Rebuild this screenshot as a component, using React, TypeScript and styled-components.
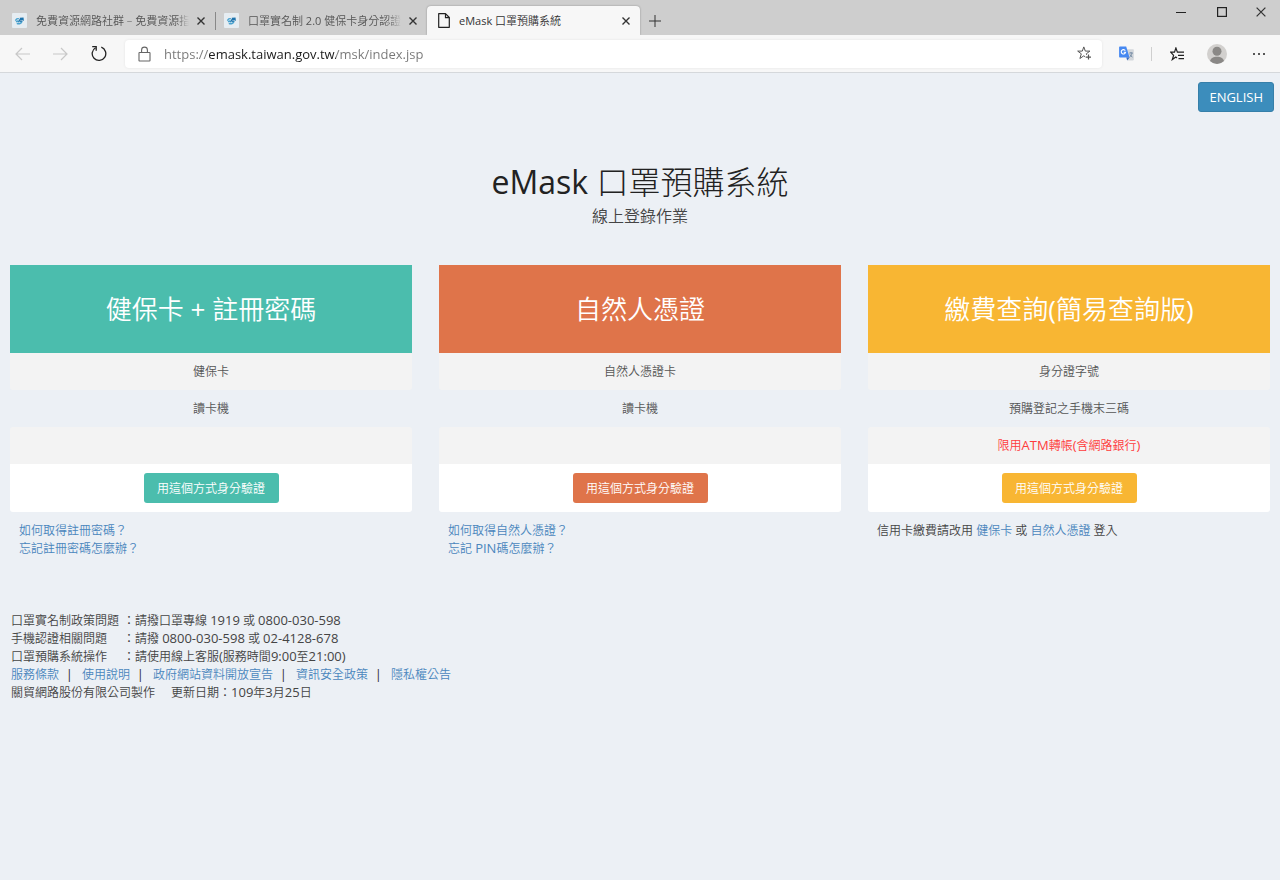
import React from 'react';
import styled, { createGlobalStyle } from 'styled-components';

const GlobalStyle = createGlobalStyle`
  *, *::before, *::after { box-sizing: border-box; }
  body {
    margin: 0;
    background: #ecf0f5;
    color: #444;
    font-family: "Open Sans", "Noto Sans CJK TC", sans-serif;
    font-size: 12px;
    font-weight: 350;
    line-height: 18px;
  }
  button, input { font-family: inherit; font-weight: inherit; }
`;

/* ---------- Browser chrome ---------- */

const TitleBar = styled.header`
  display: flex;
  align-items: flex-end;
  height: 35px;
  background: #cecece;
`;

const TabStrip = styled.nav`
  display: flex;
  align-items: flex-end;
  height: 35px;
  padding-left: 3px;
`;

const Tab = styled.div<{ $active?: boolean }>`
  display: flex;
  align-items: center;
  width: ${p => (p.$active ? 213 : 212)}px;
  height: 29px;
  padding: 0 6px 0 ${p => (p.$active ? 11 : 9)}px;
  background: ${p => (p.$active ? '#f7f7f7' : 'transparent')};
  border-radius: 4px 4px 0 0;
  color: ${p => (p.$active ? '#333' : '#555')};
  box-shadow: ${p => (p.$active ? '0 0 2px rgba(0, 0, 0, 0.35)' : 'none')};
  clip-path: inset(-3px -3px 0 -3px);
`;

const TabDivider = styled.span`
  width: 1px;
  height: 18px;
  margin: 0 -1px 5px 0;
  background: #888;
`;

const TabTitle = styled.span<{ $fade?: boolean }>`
  flex: 1;
  min-width: 0;
  margin: 0 4px 0 9px;
  overflow: hidden;
  white-space: nowrap;
  font-size: 11px;
  ${p => p.$fade && 'mask-image: linear-gradient(90deg, #000 92%, transparent);'}
`;

const IconButton = styled.button<{ $w?: number; $h?: number }>`
  display: flex;
  align-items: center;
  justify-content: center;
  flex: none;
  width: ${p => p.$w ?? 38}px;
  height: ${p => p.$h ?? 28}px;
  padding: 0;
  border: 0;
  background: transparent;
  color: #333;
  &:disabled { color: #c8c8c8; }
`;

const WindowControls = styled.div`
  display: flex;
  align-self: flex-start;
  margin-left: auto;
`;

const Toolbar = styled.div`
  display: flex;
  align-items: center;
  height: 38px;
  padding-left: 3px;
  background: #f7f7f7;
  border-bottom: 1px solid #d5d8db;
`;

const AddressBar = styled.label`
  display: flex;
  align-items: center;
  flex: 1;
  height: 28px;
  margin: 0 5px 0 6px;
  padding-left: 13px;
  background: #fff;
  border-radius: 4px;
  box-shadow: 0 0 3px rgba(0, 0, 0, 0.08);
`;

const AddressInput = styled.input`
  flex: 1;
  min-width: 0;
  height: 26px;
  margin-left: 13px;
  padding: 0;
  border: 0;
  outline: 0;
  font-size: 13px;
  font-weight: 400;
  color: transparent;
  background: linear-gradient(90deg, #777 45px, #1a1a1a 45px 172px, #777 172px);
  background-clip: text;
  -webkit-background-clip: text;
`;

const ToolDivider = styled.span`
  width: 1px;
  height: 14px;
  margin: 0 6px;
  background: #cfcfcf;
`;

/* ---------- Page ---------- */

const LanguageRow = styled.div`
  display: flex;
  justify-content: flex-end;
  padding: 9px 6px 0;
`;

const LanguageButton = styled.button`
  height: 30px;
  padding: 0 10px;
  border: 1px solid #367fa9;
  border-radius: 3px;
  background: #3c8dbc;
  color: #fff;
  font-size: 13px;
  font-weight: 400;
`;

const Heading = styled.div`
  display: flex;
  flex-direction: column;
  align-items: center;
  padding: 48px 10px 37px;
`;

const Title = styled.h1`
  margin: 0;
  color: #222;
  font-size: 32px;
  font-weight: 300;
  line-height: 44px;
`;

const Subtitle = styled.p`
  margin: 0;
  font-size: 16px;
  line-height: 24px;
`;

const Cards = styled.main`
  display: grid;
  grid-template-columns: repeat(3, 1fr);
  gap: 27px;
  padding: 0 10px;
`;

const CardTitle = styled.h2<{ $color: string }>`
  display: flex;
  align-items: center;
  justify-content: center;
  height: 88px;
  margin: 0;
  background: ${p => p.$color};
  color: #fff;
  font-size: 26px;
  font-weight: 350;
`;

const Requirements = styled.ul`
  margin: 0;
  padding: 0;
  list-style: none;
`;

const Requirement = styled.li<{ $notice?: boolean }>`
  display: flex;
  align-items: center;
  justify-content: center;
  height: 37px;
  border-radius: 0 0 3px 3px;
  color: ${p => (p.$notice ? '#ff3b3b' : '#555')};
  &:nth-child(odd) { background: #f3f3f3; }
  &:last-child { border-radius: 3px 3px 0 0; }
`;

const CardAction = styled.div`
  display: flex;
  align-items: center;
  justify-content: center;
  height: 48px;
  background: #fff;
  border-radius: 0 0 3px 3px;
`;

const VerifyButton = styled.button<{ $color: string }>`
  width: 135px;
  height: 30px;
  padding: 0;
  border: 0;
  border-radius: 3px;
  background: ${p => p.$color};
  color: #fff;
  font-size: 12px;
`;

const CardNotes = styled.div`
  display: flex;
  flex-direction: column;
  align-items: flex-start;
  padding: 10px 9px 0;
`;

const Note = styled.p`
  margin: 0;
  color: #444;
`;

const TextLink = styled.a`
  color: #4a86bd;
  text-decoration: none;
`;

const Latin = styled.span<{ $inherit?: boolean }>`
  font-size: ${p => (p.$inherit ? 'inherit' : '13px')};
  font-weight: 400;
  line-height: 1;
`;

const Footer = styled.footer`
  padding: 54px 11px 24px;
`;

const Contacts = styled.dl`
  margin: 0;
`;

const ContactRow = styled.div`
  display: grid;
  grid-template-columns: 124px 1fr;
`;

const ContactLabel = styled.dt`
  display: flex;
  justify-content: space-between;
`;

const ContactValue = styled.dd`
  margin: 0;
`;

const FooterLinks = styled.div`
  display: flex;
`;

const Separator = styled.span`
  width: 23px;
  padding-left: 7px;
  color: #222;
  font-weight: 400;
`;

const Credits = styled.div`
  display: flex;
  gap: 16px;
`;

/* ---------- Icons ---------- */

const Cross = ({ size = 8, weight = 1.4 }: { size?: number; weight?: number }) => (
  <svg width={size} height={size} viewBox="0 0 8 8" stroke="currentColor" strokeWidth={weight} fill="none">
    <path d="M.5.5l7 7M7.5.5l-7 7" />
  </svg>
);

const SiteIcon = () => (
  <svg width="15" height="15" viewBox="0 0 15 15" fill="none">
    <rect width="15" height="15" rx="1" fill="#e6edf2" />
    <path d="M3.500 7.800c.5-1.700 1.900-2.500 3.400-2M4.800 10.300c2.200 1 4.600.2 5.300-2M4 8.800l1.900-.8.800 1.300" stroke="#4ba3cf" strokeWidth="1.400" />
    <path d="M6.800 9l.9-2.200 3.300-.7M7.800 5.300l3.200-.2.300 2.700M8 8.300l2.300-.3" stroke="#1f74ad" strokeWidth="1.200" />
  </svg>
);

const PageIcon = () => (
  <svg width="12" height="15" viewBox="0 0 12 15" fill="none" stroke="#222" strokeWidth="1.200">
    <path d="M.7.700h6.800l3.800 3.800v9.800H.7z" strokeLinejoin="round" />
    <path d="M7.500.9v3.700h3.700" />
  </svg>
);

const Arrow = ({ flip }: { flip?: boolean }) => (
  <svg width="15" height="14" viewBox="0 0 15 14" fill="none" stroke="currentColor" strokeWidth="1.200">
    <path d={flip ? 'M0 7h14M8 1l6 6-6 6' : 'M15 7H1M7 1L1 7l6 6'} />
  </svg>
);

const Reload = () => (
  <svg width="16" height="17" viewBox="0 0 16 17" fill="none" stroke="#222" strokeWidth="1.300">
    <path d="M10.300 2.200A6.800 6.800 0 1 1 4.600 2.700" />
    <path d="M1.200 1.700h4v4" />
  </svg>
);

const Lock = () => (
  <svg width="13" height="16" viewBox="0 0 13 16" fill="none" stroke="#666" strokeWidth="1.100">
    <rect x="1" y="6.500" width="11" height="8.500" rx=".6" />
    <path d="M3.600 6.500V4a2.900 2.900 0 0 1 5.800 0v2.500" />
  </svg>
);

const StarAdd = () => (
  <svg width="15" height="15" viewBox="0 0 15 15" fill="none" stroke="#555" strokeWidth="1">
    <path d="M8.400 11l-1.600-1.200-3.900 2.700 1.400-4.700L.7 5.100h4.600L6.800.9l1.500 4.200h4.600L9.300 7.800l.3 1" />
    <path d="M11.500 8.600v5M9 11.100h5" strokeWidth="1.200" />
  </svg>
);

const Translate = () => (
  <svg width="15" height="15" viewBox="0 0 15 15" fill="none">
    <path d="M6 3.200h8q.8 0 .8.800v9.600q0 .8-.8.800H8.500z" fill="#d3d7dc" />
    <path d="M10.300 7h3.600M12 6v1M13 7c-.4 2.200-1.400 3.400-2.400 4.200M11 8.400c.5 1.300 1.400 2.200 2.500 2.700" stroke="#6f87a0" strokeWidth=".9" />
    <path d="M.9.400h6.300l3.300 11.200H.9q-.8 0-.8-.8V1.200Q.1.400.9.400z" fill="#4688f1" />
    <path d="M7.300 11.600h3.200L8.200 14.400z" fill="#3267c4" />
    <path d="M6.300 4.600A2.200 2.200 0 1 0 6.600 6.200H4.700" stroke="#fff" strokeWidth="1.100" />
  </svg>
);

const Favorites = () => (
  <svg width="15" height="14" viewBox="0 0 15 14" fill="none" stroke="#222" strokeWidth="1.200">
    <path d="M7 11l-1.200-.9-3.500 2.500 1.300-4.200L.7 5.100h3.800L5.900 1l1.500 4.100H14M8 8.400h6M8.500 11.600H14" />
  </svg>
);

const Avatar = () => (
  <svg width="20" height="20" viewBox="0 0 20 20">
    <circle cx="10" cy="10" r="10" fill="#d2d0ce" />
    <circle cx="10" cy="7.200" r="4.500" fill="#8a8886" />
    <path d="M3 17.100c1-3.300 3.500-4.300 7-4.300s6 1 7 4.300a10 10 0 0 1-14 0z" fill="#8a8886" />
  </svg>
);

const Dots = () => (
  <svg width="14" height="4" viewBox="0 0 14 4" fill="#222">
    <circle cx="2" cy="2" r="1" /><circle cx="7" cy="2" r="1" /><circle cx="12" cy="2" r="1" />
  </svg>
);

/* ---------- Data ---------- */

type Method = {
  id: string;
  title: React.ReactNode;
  color: string;
  needs: React.ReactNode[];
  notes: React.ReactNode;
};

const methods: Method[] = [
  {
    id: 'nhi',
    title: <span>健保卡 <Latin $inherit>+</Latin> 註冊密碼</span>,
    color: '#4bbdad',
    needs: ['健保卡', '讀卡機', ''],
    notes: (
      <>
        <TextLink href="#">如何取得註冊密碼？</TextLink>
        <TextLink href="#">忘記註冊密碼怎麼辦？</TextLink>
      </>
    ),
  },
  {
    id: 'citizen',
    title: '自然人憑證',
    color: '#df744a',
    needs: ['自然人憑證卡', '讀卡機', ''],
    notes: (
      <>
        <TextLink href="#">如何取得自然人憑證？</TextLink>
        <TextLink href="#">忘記 <Latin>PIN</Latin>碼怎麼辦？</TextLink>
      </>
    ),
  },
  {
    id: 'payment',
    title: <span>繳費查詢<Latin $inherit>(</Latin>簡易查詢版<Latin $inherit>)</Latin></span>,
    color: '#f8b633',
    needs: [
      '身分證字號',
      '預購登記之手機末三碼',
      <span>限用<Latin>ATM</Latin>轉帳<Latin>(</Latin>含網路銀行<Latin>)</Latin></span>,
    ],
    notes: (
      <Note>
        信用卡繳費請改用 <TextLink href="#">健保卡</TextLink> 或 <TextLink href="#">自然人憑證</TextLink> 登入
      </Note>
    ),
  },
];

const contacts: [string, React.ReactNode][] = [
  ['口罩實名制政策問題', <>請撥口罩專線 <Latin>1919</Latin> 或 <Latin>0800-030-598</Latin></>],
  ['手機認證相關問題', <>請撥 <Latin>0800-030-598</Latin> 或 <Latin>02-4128-678</Latin></>],
  ['口罩預購系統操作', <>請使用線上客服<Latin>(</Latin>服務時間<Latin>9:00</Latin>至<Latin>21:00)</Latin></>],
];

const footerLinks = ['服務條款', '使用說明', '政府網站資料開放宣告', '資訊安全政策', '隱私權公告'];

const CloseTab = () => (
  <IconButton $w={16} $h={16} aria-label="關閉分頁"><Cross /></IconButton>
);

export default function App() {
  return (
    <>
      <GlobalStyle />
      <TitleBar>
        <TabStrip>
          <Tab>
            <SiteIcon />
            <TabTitle $fade>免費資源網路社群 – 免費資源指南</TabTitle>
            <CloseTab />
          </Tab>
          <TabDivider />
          <Tab>
            <SiteIcon />
            <TabTitle $fade>口罩實名制 <Latin $inherit>2.0</Latin> 健保卡身分認證教學</TabTitle>
            <CloseTab />
          </Tab>
          <Tab $active>
            <PageIcon />
            <TabTitle><Latin $inherit>eMask</Latin> 口罩預購系統</TabTitle>
            <CloseTab />
          </Tab>
          <IconButton $w={30} $h={29} aria-label="新增分頁">
            <svg width="12" height="12" viewBox="0 0 12 12" stroke="#333"><path d="M6 0v12M0 6h12" /></svg>
          </IconButton>
        </TabStrip>
        <WindowControls>
          <IconButton $w={41} $h={24} aria-label="最小化">
            <svg width="10" height="10" viewBox="0 0 10 10" stroke="#222"><path d="M0 5.500h10" /></svg>
          </IconButton>
          <IconButton $w={41} $h={24} aria-label="最大化">
            <svg width="10" height="10" viewBox="0 0 10 10" stroke="#222" fill="none" strokeWidth="1.200"><rect x=".6" y=".6" width="8.800" height="8.800" /></svg>
          </IconButton>
          <IconButton $w={38} $h={24} aria-label="關閉"><Cross size={10} weight={1} /></IconButton>
        </WindowControls>
      </TitleBar>

      <Toolbar>
        <IconButton disabled aria-label="上一頁"><Arrow /></IconButton>
        <IconButton disabled aria-label="下一頁"><Arrow flip /></IconButton>
        <IconButton $w={40} aria-label="重新整理"><Reload /></IconButton>
        <AddressBar>
          <Lock />
          <AddressInput aria-label="網址" defaultValue="https://emask.taiwan.gov.tw/msk/index.jsp" />
          <IconButton $w={36} aria-label="加入我的最愛"><StarAdd /></IconButton>
        </AddressBar>
        <IconButton aria-label="翻譯"><Translate /></IconButton>
        <ToolDivider />
        <IconButton aria-label="我的最愛"><Favorites /></IconButton>
        <IconButton $w={42} aria-label="個人檔案"><Avatar /></IconButton>
        <IconButton $w={42} aria-label="設定及其他"><Dots /></IconButton>
      </Toolbar>

      <LanguageRow>
        <LanguageButton>ENGLISH</LanguageButton>
      </LanguageRow>
      <Heading>
        <Title><Latin $inherit>eMask</Latin> 口罩預購系統</Title>
        <Subtitle>線上登錄作業</Subtitle>
      </Heading>

      <Cards>
        {methods.map(m => (
          <section key={m.id}>
            <CardTitle $color={m.color}>{m.title}</CardTitle>
            <Requirements>
              {m.needs.map((need, i) => (
                <Requirement key={i} $notice={i === 2}>{need}</Requirement>
              ))}
            </Requirements>
            <CardAction>
              <VerifyButton $color={m.color}>用這個方式身分驗證</VerifyButton>
            </CardAction>
            <CardNotes>{m.notes}</CardNotes>
          </section>
        ))}
      </Cards>

      <Footer>
        <Contacts>
          {contacts.map(([label, value]) => (
            <ContactRow key={label}>
              <ContactLabel><span>{label}</span><span>：</span></ContactLabel>
              <ContactValue>{value}</ContactValue>
            </ContactRow>
          ))}
        </Contacts>
        <FooterLinks>
          {footerLinks.map((label, i) => (
            <React.Fragment key={label}>
              {i > 0 && <Separator>|</Separator>}
              <TextLink href="#">{label}</TextLink>
            </React.Fragment>
          ))}
        </FooterLinks>
        <Credits>
          <span>關貿網路股份有限公司製作</span>
          <span>更新日期：<Latin>109</Latin>年<Latin>3</Latin>月<Latin>25</Latin>日</span>
        </Credits>
      </Footer>
    </>
  );
}
